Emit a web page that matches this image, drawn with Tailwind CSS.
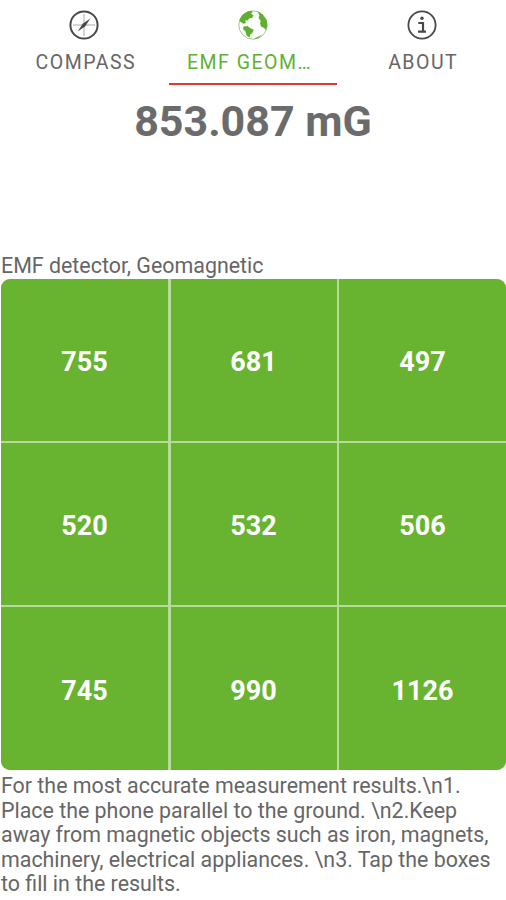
<!DOCTYPE html>
<html lang="en">
<head>
<meta charset="utf-8">
<title>EMF detector</title>
<script src="https://cdn.jsdelivr.net/npm/@tailwindcss/browser@4"></script>
</head>
<body class="w-[506px] h-[900px] overflow-hidden bg-white font-[Roboto,sans-serif] text-[#666]">
<nav class="grid grid-cols-3 h-[85px] text-[19.5px] leading-6 tracking-[1.5px]">
  <div class="flex flex-col items-center pt-2.5 border-b-2 border-transparent">
    <svg class="w-[30px] h-[30px]" viewBox="0 0 30 30" fill="none">
      <circle cx="15" cy="15" r="13.6" stroke="#484848" stroke-width="2"/>
      <path d="M15 4v22M4 15h22" stroke="#aaa" stroke-width="1"/>
      <path d="M21.3 8.5L16.3 16.3L8.7 21.5L13.7 13.7Z" fill="#484848"/>
    </svg>
    <span class="mt-[11px] pl-[3px]">COMPASS</span>
  </div>
  <div class="flex flex-col items-center pt-2.5 border-b-2 border-[#dc3c35] text-[#5fb133]">
    <svg class="w-[30px] h-[30px]" viewBox="0 0 30 30">
      <circle cx="15" cy="15" r="14.2" fill="#fff" stroke="#83c263" stroke-width=".8"/>
      <path fill="#5fb030" d="M1.5 10C3.5 5 7.5 1.5 13 .7L15 2L13 3.5L15.5 5.5L14 8L11.5 8.3L9.5 10.5L7 10.5L8 13L5.5 13.8L2.5 12Z"/>
      <path fill="#5fb030" d="M19.5 1.5L24 4L28.5 10L29.3 16L28 20L26 18L23 16.5L22 13.5L22.8 11L20.5 8L21.5 5.5Z"/>
      <path fill="#5fb030" d="M5.5 16.5L9.5 16L12 18L15.8 19.8L14.3 23.2L12.3 24.5L11.5 27.5L8.5 25.5L7.5 21.5L5 19Z"/>
      <path fill="#5fb030" d="M17 28L21 26.3L24 24.3L21 27.5L16.5 29.3Z"/>
    </svg>
    <span class="mt-[11px] -ml-[7px]">EMF GEOM…</span>
  </div>
  <div class="flex flex-col items-center pt-2.5 border-b-2 border-transparent">
    <svg class="w-[30px] h-[30px]" viewBox="0 0 30 30" fill="none" stroke="#484848">
      <circle cx="15" cy="15" r="13.6" stroke-width="1.8"/>
      <circle cx="15" cy="8.3" r="1.7" fill="#484848" stroke="none"/>
      <path d="M11.3 13H16V21.7M11 21.7H19" stroke-width="2.2"/>
    </svg>
    <span class="mt-[11px] pl-[3px]">ABOUT</span>
  </div>
</nav>
<main>
  <h1 class="h-[168px] pt-[11px] text-center text-[43px] leading-[50px] font-bold text-[#6b6b6b]">853.087 mG</h1>
  <p class="h-[26px] pl-px text-[21.4px] leading-[26px] whitespace-nowrap">EMF detector, Geomagnetic</p>
  <div class="ml-px w-[505px] h-[491px] grid grid-cols-[167px_166px_167px] grid-rows-[162px_162px_163px] gap-x-[2.5px] gap-y-[2px] rounded-[9px] overflow-hidden bg-[#b6dc9b] text-white text-[27px] font-bold *:flex *:items-center *:justify-center *:bg-[#68b32f] *:pt-[5px]">
    <div>755</div><div>681</div><div>497</div>
    <div>520</div><div>532</div><div>506</div>
    <div>745</div><div>990</div><div>1126</div>
  </div>
  <p class="pt-[4px] pl-px text-[21.4px] leading-[24.6px] whitespace-nowrap">For the most accurate measurement results.\n1.<br>Place the phone parallel to the ground. \n2.Keep<br>away from magnetic objects such as iron, magnets,<br>machinery, electrical appliances. \n3. Tap the boxes<br>to fill in the results.</p>
</main>
</body>
</html>
